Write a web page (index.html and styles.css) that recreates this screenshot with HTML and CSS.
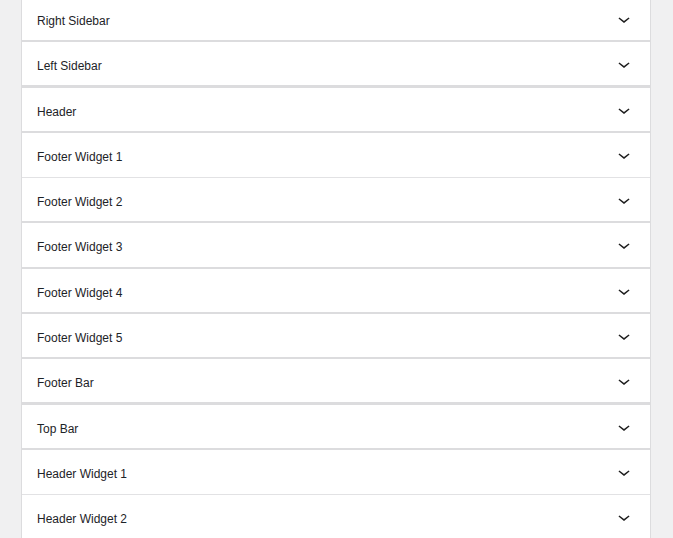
FILE: index.html
```html
<!DOCTYPE html>
<html lang="en">
<head>
  <meta charset="UTF-8" />
  <title>Widgets</title>
  <link rel="stylesheet" href="styles.css">
</head>
<body>
  <div class="widget-areas">
    <div class="area sep-2">
      <span class="area-title">Right Sidebar</span>
      <svg class="chevron" viewBox="0 0 24 24" width="24" height="24"><path d="M17.5 11.6L12 16l-5.5-4.4.9-1.2L12 14l4.6-3.6 1 1.2z"/></svg>
    </div>
    <div class="area sep-3">
      <span class="area-title">Left Sidebar</span>
      <svg class="chevron" viewBox="0 0 24 24" width="24" height="24"><path d="M17.5 11.6L12 16l-5.5-4.4.9-1.2L12 14l4.6-3.6 1 1.2z"/></svg>
    </div>
    <div class="area sep-2">
      <span class="area-title">Header</span>
      <svg class="chevron" viewBox="0 0 24 24" width="24" height="24"><path d="M17.5 11.6L12 16l-5.5-4.4.9-1.2L12 14l4.6-3.6 1 1.2z"/></svg>
    </div>
    <div class="area sep-1 tall">
      <span class="area-title">Footer Widget 1</span>
      <svg class="chevron" viewBox="0 0 24 24" width="24" height="24"><path d="M17.5 11.6L12 16l-5.5-4.4.9-1.2L12 14l4.6-3.6 1 1.2z"/></svg>
    </div>
    <div class="area sep-2">
      <span class="area-title">Footer Widget 2</span>
      <svg class="chevron" viewBox="0 0 24 24" width="24" height="24"><path d="M17.5 11.6L12 16l-5.5-4.4.9-1.2L12 14l4.6-3.6 1 1.2z"/></svg>
    </div>
    <div class="area sep-2 tall">
      <span class="area-title">Footer Widget 3</span>
      <svg class="chevron" viewBox="0 0 24 24" width="24" height="24"><path d="M17.5 11.6L12 16l-5.5-4.4.9-1.2L12 14l4.6-3.6 1 1.2z"/></svg>
    </div>
    <div class="area sep-2">
      <span class="area-title">Footer Widget 4</span>
      <svg class="chevron" viewBox="0 0 24 24" width="24" height="24"><path d="M17.5 11.6L12 16l-5.5-4.4.9-1.2L12 14l4.6-3.6 1 1.2z"/></svg>
    </div>
    <div class="area sep-2">
      <span class="area-title">Footer Widget 5</span>
      <svg class="chevron" viewBox="0 0 24 24" width="24" height="24"><path d="M17.5 11.6L12 16l-5.5-4.4.9-1.2L12 14l4.6-3.6 1 1.2z"/></svg>
    </div>
    <div class="area sep-3">
      <span class="area-title">Footer Bar</span>
      <svg class="chevron" viewBox="0 0 24 24" width="24" height="24"><path d="M17.5 11.6L12 16l-5.5-4.4.9-1.2L12 14l4.6-3.6 1 1.2z"/></svg>
    </div>
    <div class="area sep-2">
      <span class="area-title">Top Bar</span>
      <svg class="chevron" viewBox="0 0 24 24" width="24" height="24"><path d="M17.5 11.6L12 16l-5.5-4.4.9-1.2L12 14l4.6-3.6 1 1.2z"/></svg>
    </div>
    <div class="area sep-1 tall">
      <span class="area-title">Header Widget 1</span>
      <svg class="chevron" viewBox="0 0 24 24" width="24" height="24"><path d="M17.5 11.6L12 16l-5.5-4.4.9-1.2L12 14l4.6-3.6 1 1.2z"/></svg>
    </div>
    <div class="area sep-1">
      <span class="area-title">Header Widget 2</span>
      <svg class="chevron" viewBox="0 0 24 24" width="24" height="24"><path d="M17.5 11.6L12 16l-5.5-4.4.9-1.2L12 14l4.6-3.6 1 1.2z"/></svg>
    </div>
  </div>
</body>
</html>
```

FILE: styles.css
```css
* {
  margin: 0;
  padding: 0;
  box-sizing: border-box;
}

body {
  background-color: #f0f0f1;
  color: #1d2327;
  font-family: "Liberation Sans", Arial, sans-serif;
  font-size: 12px;
  overflow: hidden;
}

.widget-areas {
  width: 630px;
  margin: -3px 0 0 21px;
  border-left: 1px solid #dcdcde;
  border-right: 1px solid #dcdcde;
}

.area {
  display: flex;
  align-items: center;
  justify-content: space-between;
  height: 45px;
  padding: 0 14px 0 15px;
  background: #ffffff;
}

.area.tall {
  height: 46px;
}

.sep-1 {
  border-bottom: 1px solid #e2e2e4;
}

.area.sep-1 {
  height: 44px;
}

.area.sep-1.tall {
  height: 45px;
}

.sep-2 {
  border-bottom: 2px solid #dcdcde;
}

.sep-3 {
  border-bottom: 3px solid #dcdcde;
  height: 46px;
}

.area-title {
  line-height: 1;
  padding-top: 4px;
}

.chevron {
  fill: #1e1e1e;
  display: block;
}
```
